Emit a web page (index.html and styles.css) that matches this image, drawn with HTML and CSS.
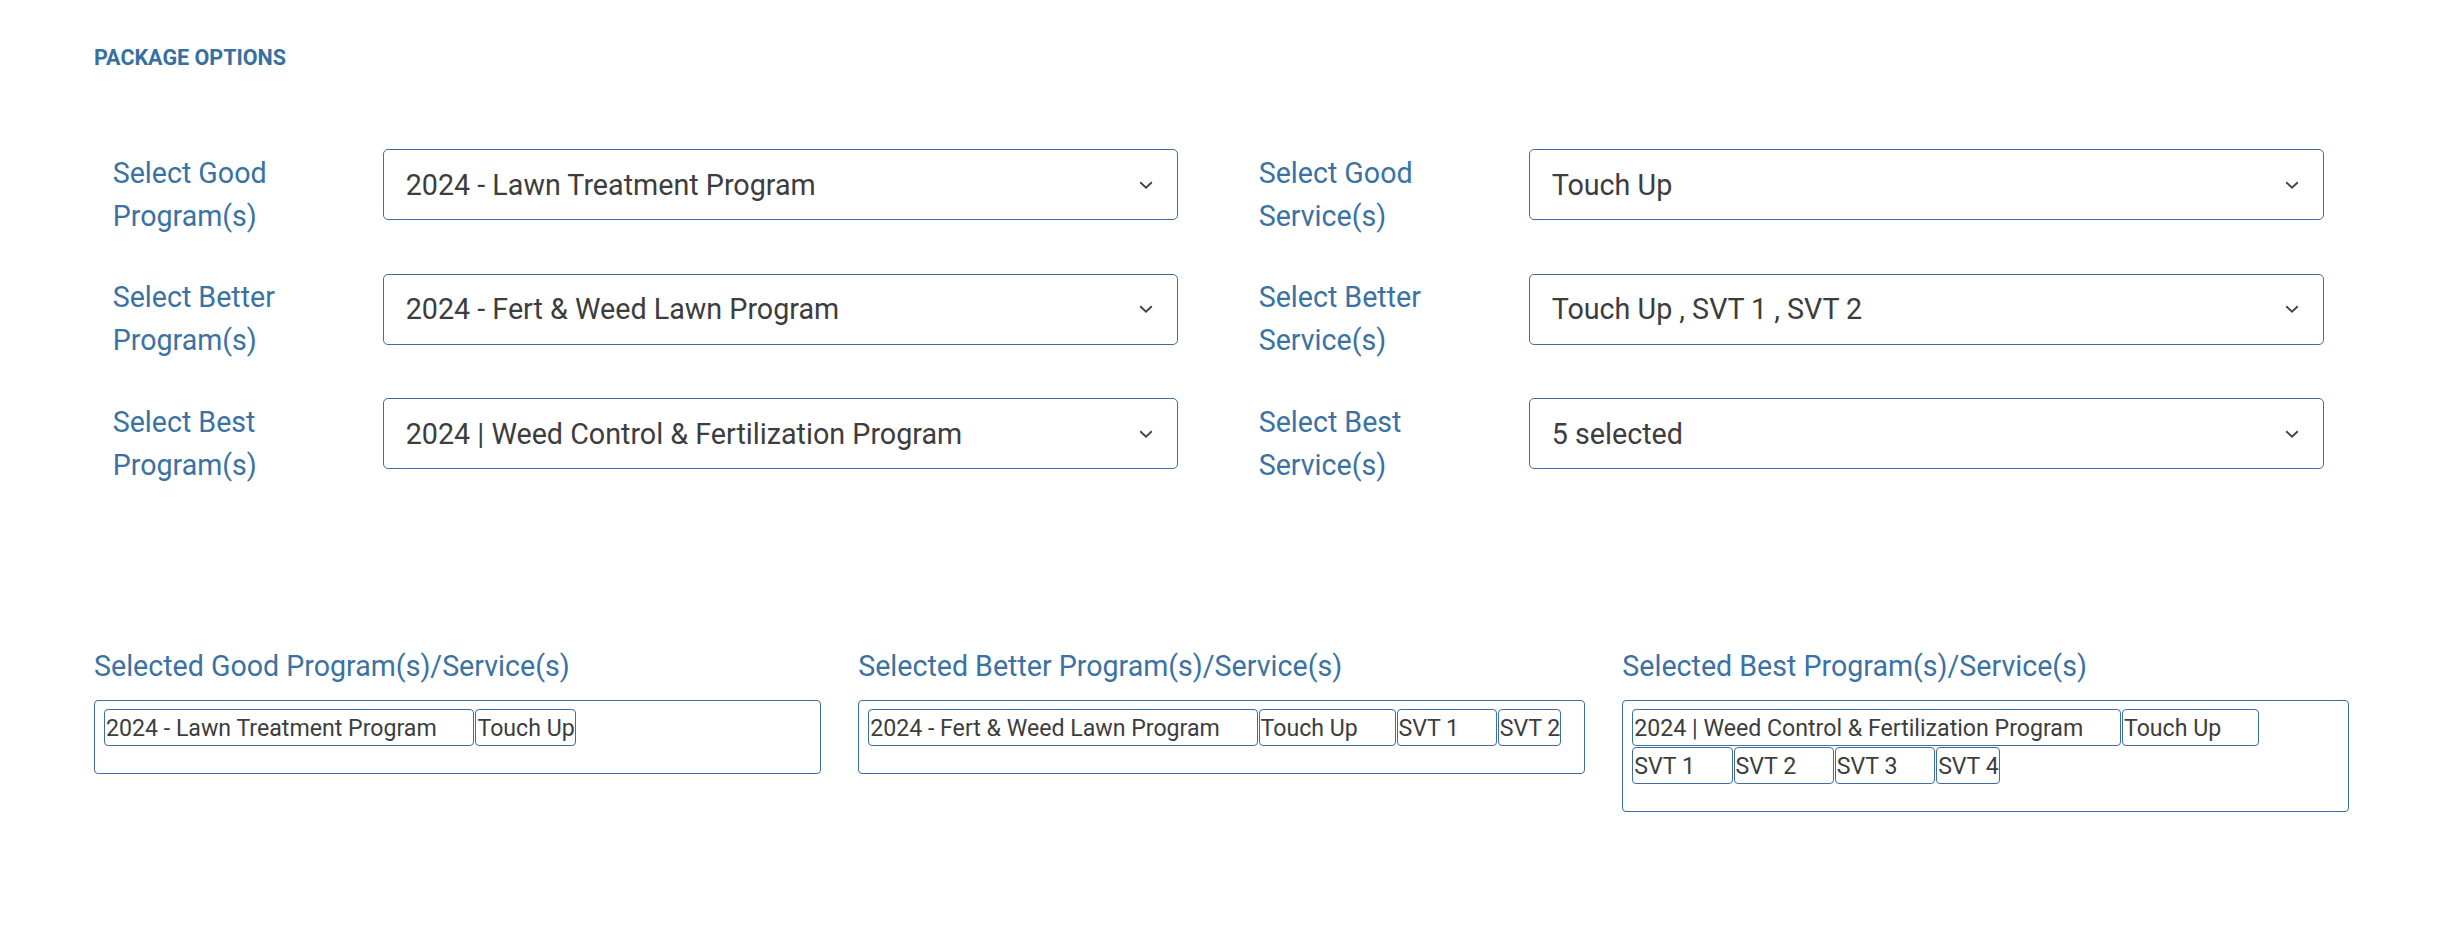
FILE: index.html
```html
<!DOCTYPE html>
<html lang="en">
<head>
<meta charset="utf-8">
<title>Package Options</title>
<link rel="stylesheet" href="styles.css">
</head>
<body>
<div class="page">
  <h2 class="heading">PACKAGE OPTIONS</h2>

  <div class="options">
    <div class="option-col">
      <div class="field-label">Select Good Program(s)</div>
      <div class="select"><span class="select-text">2024 - Lawn Treatment Program</span><svg class="chev" width="14" height="8" viewBox="0 0 14 8"><path d="M1.2 1.2 L7 6.6 L12.8 1.2" fill="none" stroke="#444" stroke-width="1.9"/></svg></div>
      <div class="field-label">Select Better Program(s)</div>
      <div class="select"><span class="select-text">2024 - Fert &amp; Weed Lawn Program</span><svg class="chev" width="14" height="8" viewBox="0 0 14 8"><path d="M1.2 1.2 L7 6.6 L12.8 1.2" fill="none" stroke="#444" stroke-width="1.9"/></svg></div>
      <div class="field-label">Select Best Program(s)</div>
      <div class="select"><span class="select-text">2024 | Weed Control &amp; Fertilization Program</span><svg class="chev" width="14" height="8" viewBox="0 0 14 8"><path d="M1.2 1.2 L7 6.6 L12.8 1.2" fill="none" stroke="#444" stroke-width="1.9"/></svg></div>
    </div>
    <div class="option-col">
      <div class="field-label">Select Good Service(s)</div>
      <div class="select"><span class="select-text">Touch Up</span><svg class="chev" width="14" height="8" viewBox="0 0 14 8"><path d="M1.2 1.2 L7 6.6 L12.8 1.2" fill="none" stroke="#444" stroke-width="1.9"/></svg></div>
      <div class="field-label">Select Better Service(s)</div>
      <div class="select"><span class="select-text">Touch Up , SVT 1 , SVT 2</span><svg class="chev" width="14" height="8" viewBox="0 0 14 8"><path d="M1.2 1.2 L7 6.6 L12.8 1.2" fill="none" stroke="#444" stroke-width="1.9"/></svg></div>
      <div class="field-label">Select Best Service(s)</div>
      <div class="select"><span class="select-text">5 selected</span><svg class="chev" width="14" height="8" viewBox="0 0 14 8"><path d="M1.2 1.2 L7 6.6 L12.8 1.2" fill="none" stroke="#444" stroke-width="1.9"/></svg></div>
    </div>
  </div>

  <div class="selected">
    <div class="selected-col">
      <div class="selected-title">Selected Good Program(s)/Service(s)</div>
      <div class="tag-box">
        <span class="tag">2024 - Lawn Treatment Program</span>
        <span class="tag">Touch Up</span>
      </div>
    </div>
    <div class="selected-col">
      <div class="selected-title">Selected Better Program(s)/Service(s)</div>
      <div class="tag-box">
        <span class="tag">2024 - Fert &amp; Weed Lawn Program</span>
        <span class="tag">Touch Up</span>
        <span class="tag">SVT 1</span>
        <span class="tag">SVT 2</span>
      </div>
    </div>
    <div class="selected-col">
      <div class="selected-title">Selected Best Program(s)/Service(s)</div>
      <div class="tag-box">
        <span class="tag">2024 | Weed Control &amp; Fertilization Program</span>
        <span class="tag">Touch Up</span>
        <span class="tag">SVT 1</span>
        <span class="tag">SVT 2</span>
        <span class="tag">SVT 3</span>
        <span class="tag">SVT 4</span>
      </div>
    </div>
  </div>
</div>
</body>
</html>
```

FILE: styles.css
```css
html, body {
  margin: 0;
  padding: 0;
  background: #ffffff;
}

body {
  font-family: Roboto, "Liberation Sans", Arial, sans-serif;
  color: #404040;
}

.page {
  width: 2444px;
  box-sizing: border-box;
  padding: 45.5px 95px 0 94px;
}

.heading {
  margin: 0;
  font-size: 21.5px;
  line-height: 24.4px;
  font-weight: 700;
  color: #3670a1;
  letter-spacing: 0;
}

.options {
  margin-top: 79.4px;
  display: grid;
  grid-template-columns: 1109px 1109px;
  column-gap: 37px;
}

.option-col {
  display: grid;
  grid-template-columns: 270px 1fr;
  row-gap: 36px;
  padding: 0 24.7px 0 18.7px;
  align-items: start;
}

.field-label {
  padding-top: 2.3px;
  font-size: 28.6px;
  line-height: 43.25px;
  color: #3a72a4;
  width: 170px;
  height: 86.2px;
}

.select {
  height: 71px;
  box-sizing: border-box;
  border: 1px solid #3a6f9f;
  border-radius: 5px;
  display: flex;
  align-items: center;
  justify-content: space-between;
  padding: 0 24px 0 22px;
}

.select-text {
  font-size: 28.7px;
  line-height: 34px;
  color: #3d3d3d;
  white-space: nowrap;
}

.chev {
  display: block;
  flex: none;
}

.selected {
  margin-top: 162.8px;
  display: grid;
  grid-template-columns: repeat(3, 1fr);
  column-gap: 37.5px;
}

.selected-title {
  padding-top: 1.3px;
  font-size: 28.6px;
  line-height: 31.1px;
  color: #3a72a4;
  margin-bottom: 17.7px;
  white-space: nowrap;
}

.tag-box {
  border: 1px solid #3a6f9f;
  border-radius: 4px;
  padding: 8.6px 9px 26.7px 9px;
  display: flex;
  flex-wrap: wrap;
  gap: 1px;
  align-items: flex-start;
}

.tag {
  box-sizing: border-box;
  height: 37px;
  border: 1px solid #3a6f9f;
  border-radius: 4px;
  padding: 1.6px 0 0 1px;
  font-size: 23.15px;
  line-height: 34.8px;
  color: #3d3d3d;
  white-space: nowrap;
  overflow: hidden;
}

.tag:not(:last-child) {
  padding-right: 36.7px;
}
```
